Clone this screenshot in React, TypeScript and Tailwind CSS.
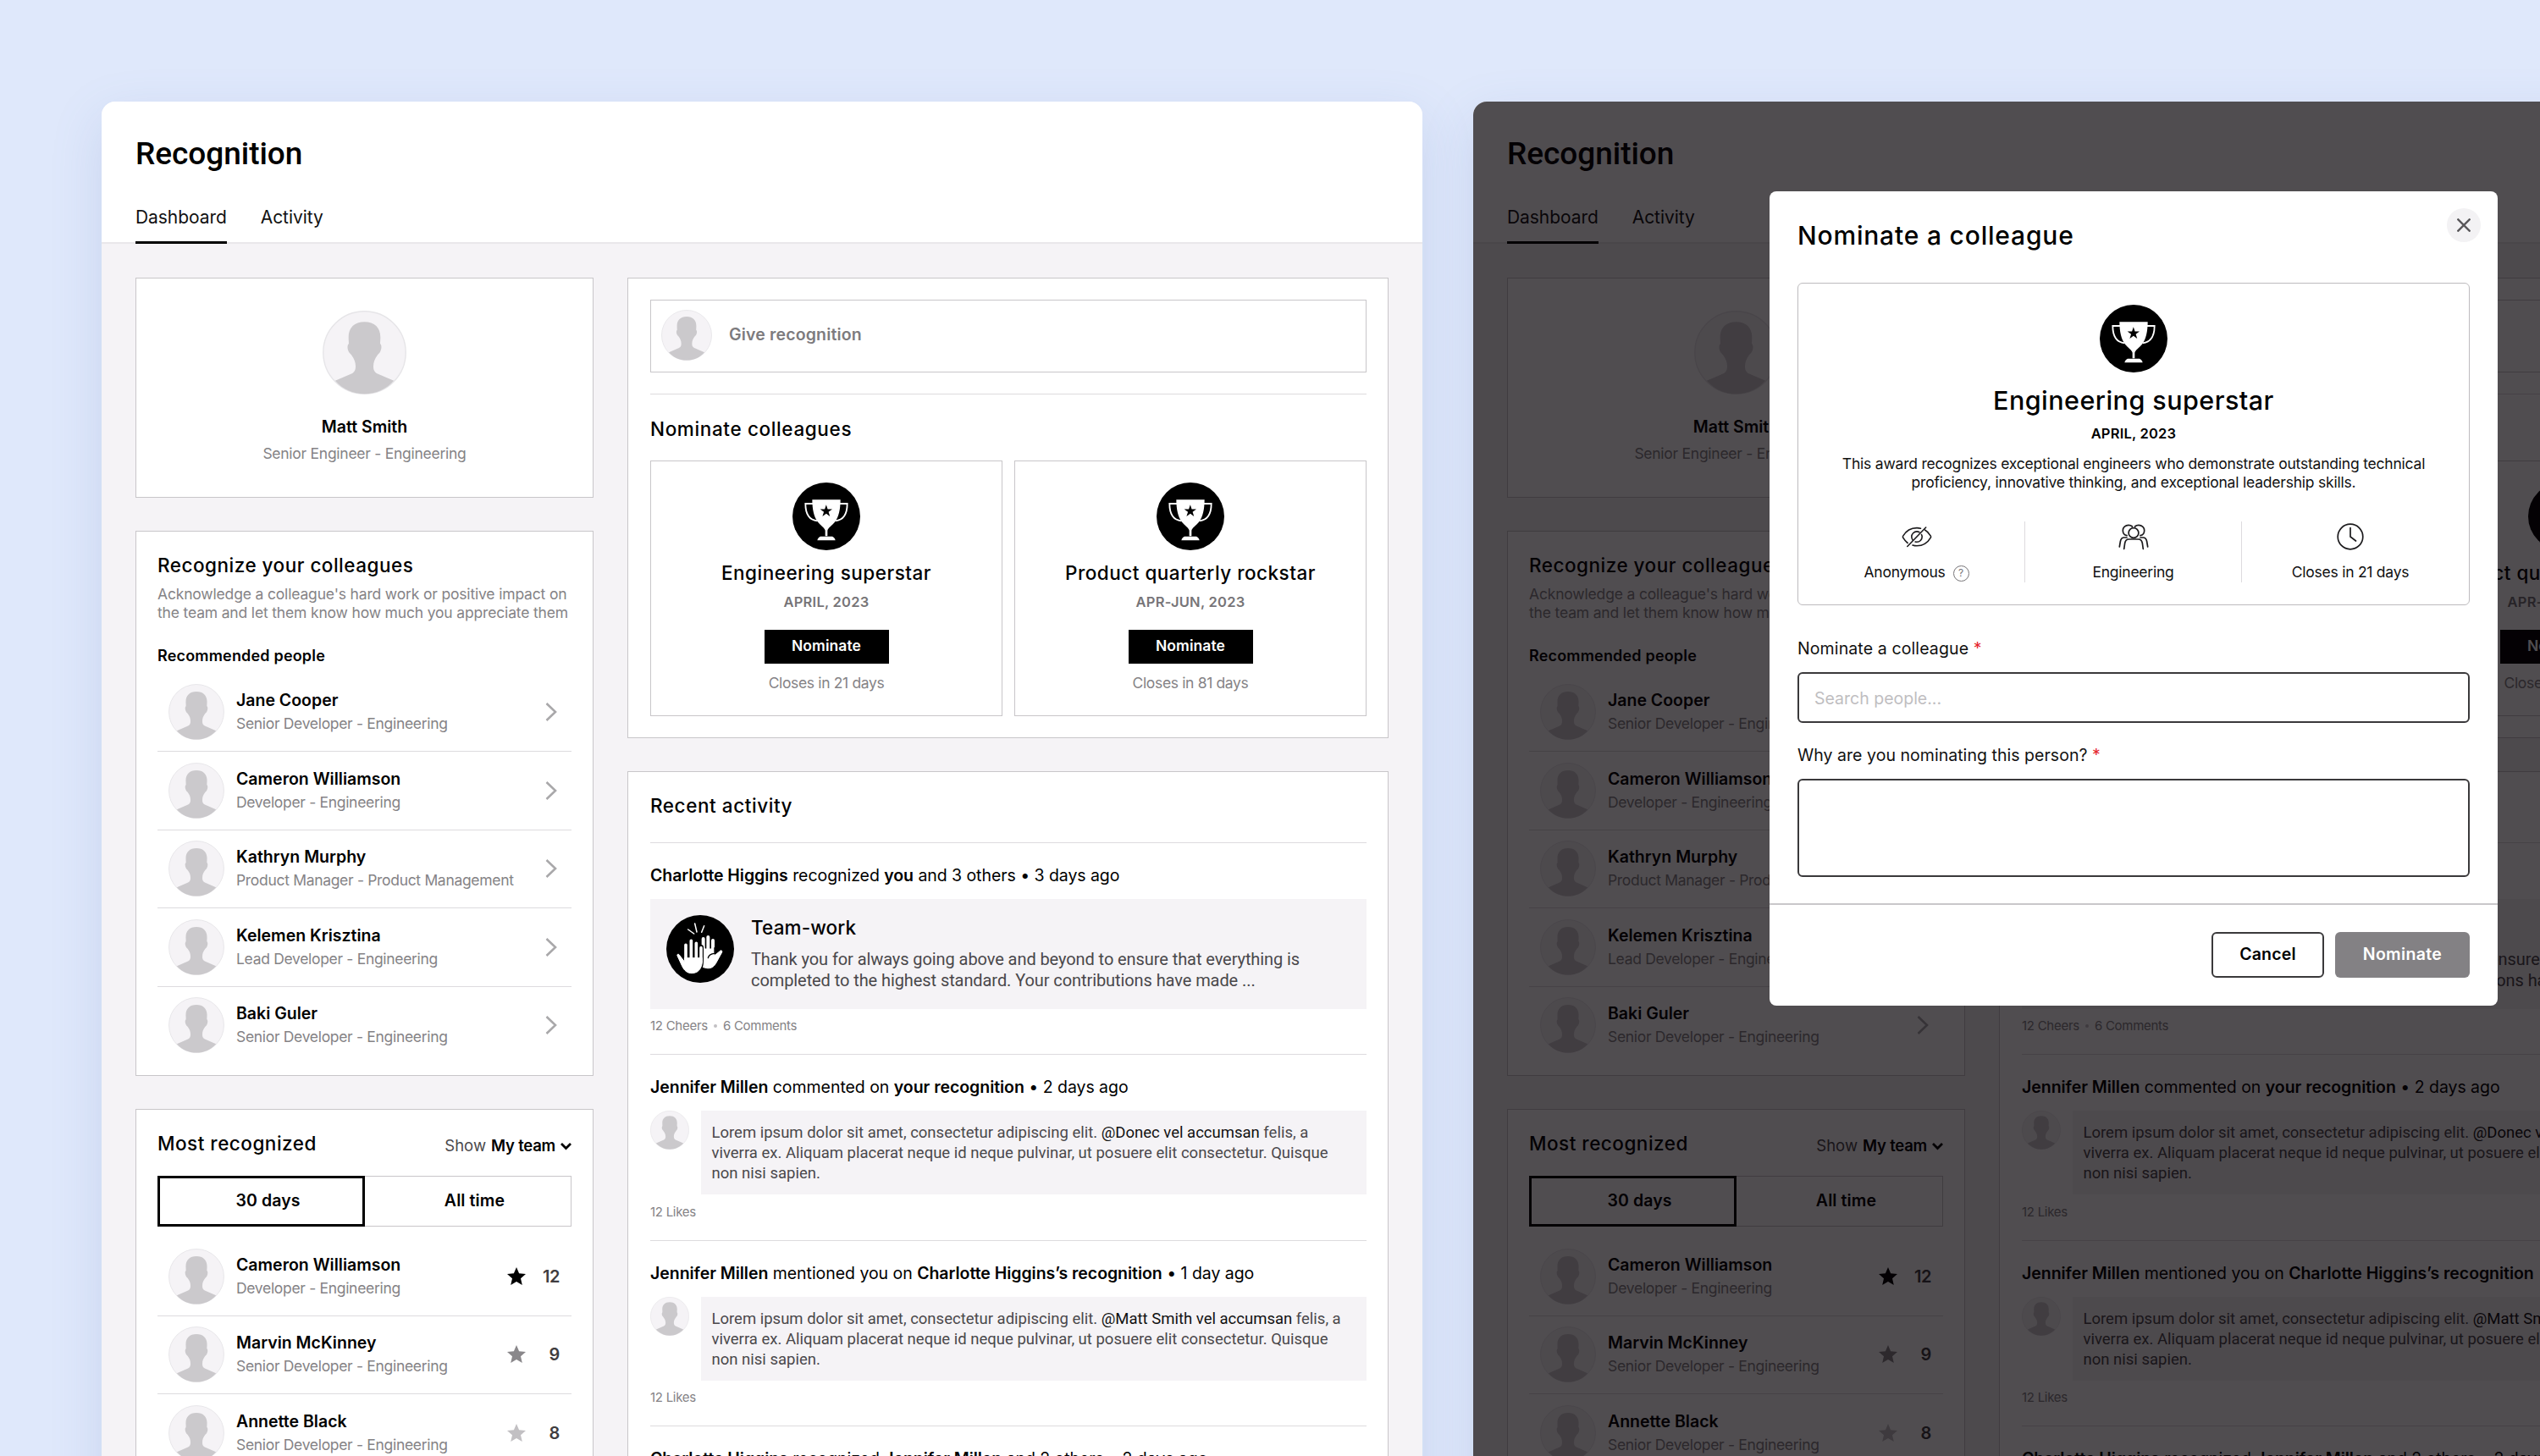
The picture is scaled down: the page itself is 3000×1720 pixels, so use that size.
import React from 'react';

interface Person {
  name: string;
  role: string;
}

interface RankedPerson extends Person {
  count: number;
  starClass: string;
}

interface Award {
  title: string;
  period: string;
  closes: string;
}

const RECOMMENDED: Person[] = [
  { name: 'Jane Cooper', role: 'Senior Developer - Engineering' },
  { name: 'Cameron Williamson', role: 'Developer - Engineering' },
  { name: 'Kathryn Murphy', role: 'Product Manager - Product Management' },
  { name: 'Kelemen Krisztina', role: 'Lead Developer - Engineering' },
  { name: 'Baki Guler', role: 'Senior Developer - Engineering' },
];

const MOST_RECOGNIZED: RankedPerson[] = [
  { name: 'Cameron Williamson', role: 'Developer - Engineering', count: 12, starClass: 'text-black' },
  { name: 'Marvin McKinney', role: 'Senior Developer - Engineering', count: 9, starClass: 'text-[#8a888b]' },
  { name: 'Annette Black', role: 'Senior Developer - Engineering', count: 8, starClass: 'text-[#c2c0c3]' },
];

const AWARDS: Award[] = [
  { title: 'Engineering superstar', period: 'APRIL, 2023', closes: 'Closes in 21 days' },
  { title: 'Product quarterly rockstar', period: 'APR-JUN, 2023', closes: 'Closes in 81 days' },
];

const Avatar: React.FC<{ className: string }> = ({ className }) => (
  <svg className={`shrink-0 ${className}`} viewBox="0 0 100 100">
    <circle cx="50" cy="50" r="49.2" fill="#f5f3f6" stroke="#e6e5e8" strokeWidth="1.4" />
    <path
      d="M50 13.5c-12 0-19 7-19 18 0 3 .3 6 .3 8-2 1.500-2 6.500.2 10 .9 1.600 2 2.200 3 3.500 3.300 4.500 4.900 8.500 4.900 13.500 0 3.500-.8 6.500-4.400 8.500L15 83.700C24 94 36 99.300 50 99.300S76 94 85 83.700L65 75c-3.600-2-4.400-5-4.400-8.500 0-5 1.600-9 4.900-13.500 1-1.300 2.100-1.900 3-3.500 2.200-3.500 2.200-8.500.2-10 0-2 .3-5 .3-8 0-11-7-18-19-18z"
      fill="#cbc9cc"
    />
  </svg>
);

const TrophyBadge: React.FC = () => (
  <svg className="w-20 h-20 shrink-0" viewBox="0 0 240 240">
    <circle cx="120" cy="120" r="120" fill="#000" />
    <path d="M72 75H46c0 34 12 58 42 61M168 75h26c0 34-12 58-42 61" fill="none" stroke="#fff" strokeWidth="5.500" />
    <path d="M70 61h100c0 34-6 62-20 79-11 13-24 20-26 30v20h-8v-20c-2-10-15-17-26-30-14-17-20-45-20-79z" fill="#fff" />
    <path d="M99 191h42c5 2 10 7 11 14H88c1-7 6-12 11-14z" fill="#fff" />
    <path d="M119.500 79l5.200 15.500h16.300l-13.200 9.700 5 16-13.300-9.700-13.300 9.700 5-16-13.200-9.700h16.300z" fill="#000" />
  </svg>
);

const HighFiveBadge: React.FC = () => (
  <svg className="w-20 h-20 shrink-0" viewBox="0 0 240 240">
    <circle cx="120" cy="120" r="120" fill="#000" />
    <path d="M77 51l21 15M101 30l7 30M134 38l-9 23" stroke="#fff" strokeWidth="4.500" strokeLinecap="round" />
    {/* right hand */}
    <g fill="#fff" stroke="#fff" strokeLinecap="round" strokeLinejoin="round">
      <path d="M131 84v50M148 78v50M165 90v45" strokeWidth="12" />
      <path d="M126 120h44v24l22-18c3-2 7 1 5 6l-22 40c-8 14-20 18-32 16l-16-4z" strokeWidth="3" />
    </g>
    <path d="M171 116v20c-13 1-21 5-23 16" fill="none" stroke="#000" strokeWidth="4" strokeLinecap="round" />
    {/* left hand, outlined so that it reads in front */}
    <path d="M123 114v46c0 28-10 46-33 46" fill="none" stroke="#000" strokeWidth="18" strokeLinecap="round" />
    <g fill="#fff" stroke="#fff" strokeLinecap="round" strokeLinejoin="round">
      <path d="M69 106v50M88 91v60M106 100v50M123 116v40" strokeWidth="11" />
      <path d="M65 152h62.500c2 26-8 54-37 54-17 0-27-10-34-24L39 144c-2-5 3-7 6-4l20 26z" strokeWidth="3" />
    </g>
  </svg>
);

const StarIcon: React.FC<{ className: string }> = ({ className }) => (
  <svg className={`w-[22px] h-[22px] ${className}`} viewBox="0 0 22 22" fill="currentColor">
    <path d="M11 0l3.100 7.300 7.900.7-6 5.200 1.800 7.800L11 17l-6.800 4L6 13.200 0 8l7.900-.7z" />
  </svg>
);

const ChevronRight: React.FC = () => (
  <svg className="w-[14px] h-6" viewBox="0 0 14 24" fill="none" stroke="#a9a8aa" strokeWidth="2.600">
    <path d="M1.500 2l10.500 10-10.500 10" />
  </svg>
);

const EyeOffIcon: React.FC = () => (
  <svg className="w-9 h-8" viewBox="0 0 36 32" fill="none" stroke="#1c1b1d" strokeWidth="1.600" strokeLinecap="round">
    <path d="M22.500 6.200C21 5.800 19.500 5.600 18 5.600 11 5.600 5 9.500 1.700 15.200c-.5.800-.5 1.300 0 2 1.500 2.500 3.200 4.600 5.400 6.300M27.500 8c3 1.600 5 4.200 6.800 7.200.5.800.5 1.300 0 2C31 22.900 25 26.800 18 26.800c-1.800 0-3.500-.3-5-.8" />
    <path d="M21 10.700c-.9-.5-1.900-.8-3-.8-3.400 0-6.200 2.800-6.200 6.200 0 1.600.6 3 1.500 4.100M23.500 13.500c.4.800.7 1.700.7 2.600 0 3.400-2.800 6.200-6.200 6.200-.7 0-1.300-.1-1.900-.3" />
    <path d="M6.800 27.500L28.700 5" />
  </svg>
);

const PeopleIcon: React.FC = () => (
  <svg className="w-9 h-8" viewBox="0 0 36 32" fill="none" stroke="#1c1b1d" strokeWidth="1.700" strokeLinecap="round">
    <circle cx="18" cy="11.500" r="5.900" />
    <path d="M16.500 4C15.300 2.900 13.700 2.300 12 2.300c-3.700 0-6.700 2.600-6.700 6.200 0 3.200 2 5.700 4.800 6.200M19.500 4c1.200-1.100 2.800-1.700 4.500-1.700 3.700 0 6.700 2.600 6.700 6.200 0 3.200-2 5.700-4.800 6.200" />
    <path d="M6.700 30.500l1-7c.5-3 2.100-4.500 4.800-4.500h11c2.700 0 4.300 1.500 4.800 4.500l1 7M1.300 28l1.100-6.500c.5-3 2-4.500 4.600-4.500h3M34.700 28l-1.100-6.500c-.5-3-2-4.500-4.600-4.500h-3" />
  </svg>
);

const ClockIcon: React.FC = () => (
  <svg className="w-8 h-8" viewBox="0 0 32 32" fill="none" stroke="#1c1b1d" strokeWidth="1.700" strokeLinecap="round">
    <circle cx="16" cy="16" r="14.800" />
    <path d="M16 5.500V16l6.500 5" />
  </svg>
);

const PersonLabel: React.FC<Person> = ({ name, role }) => (
  <div className="flex flex-col gap-1 flex-1 whitespace-nowrap">
    <span className="text-[19.5px] leading-6 font-semibold text-black">{name}</span>
    <span className="text-[17.5px] leading-6 tracking-[-0.018em] text-[#858386]">{role}</span>
  </div>
);

const ProfileCard: React.FC = () => (
  <section className="h-[260px] bg-white border border-[#c8c6c9] flex flex-col items-center pt-[38px]">
    <Avatar className="w-[99px] h-[99px]" />
    <p className="mt-[26px] text-[19.5px] leading-6 font-semibold text-black">Matt Smith</p>
    <p className="mt-[8px] text-[17.5px] leading-6 tracking-[-0.015em] text-[#858386]">Senior Engineer - Engineering</p>
  </section>
);

const RecommendedCard: React.FC = () => (
  <section className="h-[643.5px] bg-white border border-[#c8c6c9] px-[25px] pt-[25.5px]">
    <h2 className="text-[22.5px] leading-7 font-[540] tracking-[0.022em] text-black">Recognize your colleagues</h2>
    <p className="mt-[9px] text-[17.5px] leading-[22.5px] tracking-[-0.0095em] text-[#858386] whitespace-nowrap">
      Acknowledge a colleague's hard work or positive impact on
      <br />
      the team and let them know how much you appreciate them
    </p>
    <h3 className="mt-[27px] text-[18px] leading-6 font-semibold tracking-[0.01em] text-black">Recommended people</h3>
    <ul className="mt-[9px]">
      {RECOMMENDED.map((person) => (
        <li key={person.name} className="h-[92.5px] flex items-center gap-3.5 pl-[13px] pr-[17px] border-b border-[#dddbde] last:border-transparent">
          <Avatar className="w-[66px] h-[66px]" />
          <PersonLabel {...person} />
          <ChevronRight />
        </li>
      ))}
    </ul>
  </section>
);

const MostRecognizedCard: React.FC = () => (
  <section className="flex-1 bg-white border border-[#c8c6c9] px-[25px] pt-[26px]">
    <div className="flex items-center justify-between">
      <h2 className="text-[22.5px] leading-7 font-[540] tracking-[0.022em] text-black">Most recognized</h2>
      <div className="flex items-center gap-1.5 pt-1 text-[18.5px] leading-6">
        <span className="text-[#4b494c]">Show</span>
        <span className="font-semibold tracking-[-0.012em] text-black">My team</span>
        <svg className="w-[13px] h-2.5 mt-0.5" viewBox="0 0 13 10" fill="none" stroke="#000" strokeWidth="2.800">
          <path d="M1 2l5.500 5.500L12 2" />
        </svg>
      </div>
    </div>
    <div className="mt-[23.5px] h-[60px] flex text-[19.5px] font-[560] tracking-[0.006em] text-black">
      <button className="w-[245px] pl-4 pt-px border-[3px] border-black">30 days</button>
      <button className="flex-1 pl-4 pt-px border border-l-0 border-[#c8c6c9]">All time</button>
    </div>
    <ul className="mt-[13.5px]">
      {MOST_RECOGNIZED.map((person) => (
        <li key={person.name} className="h-[92.5px] flex items-center gap-3.5 pl-[13px] pr-3.5 border-b border-[#dddbde]">
          <Avatar className="w-[66px] h-[66px]" />
          <PersonLabel name={person.name} role={person.role} />
          <StarIcon className={person.starClass} />
          <span className="w-[26px] text-right text-[20px] font-[560] tracking-[-0.02em] text-[#3f3d40]">{person.count}</span>
        </li>
      ))}
    </ul>
  </section>
);

const AwardTile: React.FC<Award> = ({ title, period, closes }) => (
  <div className="w-[416px] h-[302px] border border-[#c8c6c9] flex flex-col items-center pt-[25px]">
    <TrophyBadge />
    <h3 className="mt-[13.5px] text-[22.5px] leading-7 font-[540] tracking-[0.022em] text-black">{title}</h3>
    <p className="mt-[8px] text-[16.5px] leading-6 font-[560] tracking-[0.015em] text-[#777578]">{period}</p>
    <button className="mt-[20.5px] w-[147px] h-10 bg-black text-white text-[17.5px] font-[560] tracking-[0.004em]">Nominate</button>
    <p className="mt-[11px] text-[17.5px] leading-6 tracking-[-0.02em] text-[#858386]">{closes}</p>
  </div>
);

const NominateCard: React.FC = () => (
  <section className="h-[544px] bg-white border border-[#c8c6c9] pl-[26px] pr-[25px] pt-[25px]">
    <div className="h-[86px] flex items-center gap-[20px] pl-3 pb-px border border-[#c8c6c9]">
      <Avatar className="w-[60px] h-[60px]" />
      <span className="text-[19.5px] font-[560] tracking-[0.008em] text-[#7d7b7e]">Give recognition</span>
    </div>
    <div className="mt-[25px] h-px bg-[#dddbde]" />
    <h2 className="mt-[27px] text-[22.5px] leading-7 font-[540] tracking-[0.028em] text-black">Nominate colleagues</h2>
    <div className="mt-[23px] flex justify-between">
      {AWARDS.map((award) => (
        <AwardTile key={award.title} {...award} />
      ))}
    </div>
  </section>
);

const Strong: React.FC<{ children: React.ReactNode }> = ({ children }) => (
  <span className="font-semibold">{children}</span>
);

const CommentItem: React.FC<{ heading: React.ReactNode; mention: string }> = ({ heading, mention }) => (
  <article className="pt-6 border-b border-[#dddbde]">
    <p className="text-[19.5px] leading-7 tracking-[-0.002em] text-black">{heading}</p>
    <div className="mt-3.5 flex justify-between items-start">
      <Avatar className="w-[46px] h-[46px]" />
      <p className="w-[786.5px] h-[99px] bg-[#f5f3f6] pl-[13px] pt-[14px] font-[Roboto,sans-serif] text-[18.5px] leading-6 text-[#4a484b] whitespace-nowrap">
        Lorem ipsum dolor sit amet, consectetur adipiscing elit. <span className="text-[#111]">{mention}</span> felis, a
        <br />
        viverra ex. Aliquam placerat neque id neque pulvinar, ut posuere elit consectetur. Quisque
        <br />
        non nisi sapien.
      </p>
    </div>
    <p className="mt-[10.5px] pb-[23px] text-[15px] leading-5 tracking-[-0.018em] text-[#858386]">12 Likes</p>
  </article>
);

const ActivityCard: React.FC = () => (
  <section className="flex-1 bg-white border border-[#c8c6c9] pl-[26px] pr-[25px] pt-[26px]">
    <h2 className="pb-[29px] text-[22.5px] leading-7 font-[540] tracking-[0.025em] text-black border-b border-[#dddbde]">Recent activity</h2>
    <article className="pt-6 border-b border-[#dddbde]">
      <p className="text-[19.5px] leading-7 tracking-[-0.003em] text-black">
        <Strong>Charlotte Higgins</Strong> recognized <Strong>you</Strong> and 3 others • 3 days ago
      </p>
      <div className="mt-3.5 h-[129.5px] flex gap-5 bg-[#f5f3f6] pl-[19px] pt-[19px]">
        <HighFiveBadge />
        <div className="flex flex-col gap-[11.5px] pt-[0.5px]">
          <h3 className="text-[22.5px] leading-7 font-[540] tracking-[0.006em] text-black">Team-work</h3>
          <p className="font-[Roboto,sans-serif] text-[20px] leading-[25px] tracking-[-0.004em] text-[#4a484b] whitespace-nowrap">
            Thank you for always going above and beyond to ensure that everything is
            <br />
            completed to the highest standard. Your contributions have made ...
          </p>
        </div>
      </div>
      <div className="mt-[10.5px] pb-[23px] flex items-center gap-[7px] text-[15px] leading-5 tracking-[-0.018em] text-[#858386]">
        <span>12 Cheers</span>
        <span className="w-[4px] h-[4px] rounded-full bg-[#c2c0c3]" />
        <span>6 Comments</span>
      </div>
    </article>
    <CommentItem
      heading={<><Strong>Jennifer Millen</Strong> commented on <Strong>your recognition</Strong> • 2 days ago</>}
      mention="@Donec vel accumsan"
    />
    <CommentItem
      heading={<><Strong>Jennifer Millen</Strong> mentioned you on <Strong>Charlotte Higgins’s recognition</Strong> • 1 day ago</>}
      mention="@Matt Smith vel accumsan"
    />
    <p className="pt-6 text-[19.5px] leading-7 tracking-[-0.003em] text-black">
      <Strong>Charlotte Higgins</Strong> recognized <Strong>Jennifer Millen</Strong> and 2 others • 2 days ago
    </p>
  </section>
);

const RecognitionPage: React.FC = () => (
  <div className="w-[1560px] h-[1700px] flex flex-col bg-[#f5f3f6] rounded-[16px] overflow-hidden">
    <header className="h-[168px] shrink-0 bg-white border-b-2 border-[#e9e7ea] px-10 flex flex-col justify-end">
      <h1 className="mb-[39px] font-[Roboto,sans-serif] text-[37px] leading-[44px] font-medium tracking-[-0.001em] text-black">Recognition</h1>
      <nav className="-mb-0.5 flex gap-10 text-[21px] leading-7 tracking-[-0.003em] text-[#111]">
        <a className="h-[45px] border-b-[3px] border-black">Dashboard</a>
        <a className="h-[45px]">Activity</a>
      </nav>
    </header>
    <main className="flex-1 flex justify-between px-10 pt-[39.5px]">
      <div className="w-[541px] flex flex-col gap-[39.5px]">
        <ProfileCard />
        <RecommendedCard />
        <MostRecognizedCard />
      </div>
      <div className="w-[899px] flex flex-col gap-[39.5px]">
        <NominateCard />
        <ActivityCard />
      </div>
    </main>
  </div>
);

const NominateModal: React.FC = () => (
  <div className="absolute left-[350px] top-[106px] w-[860px] h-[962px] bg-white rounded-lg flex flex-col">
    <button className="absolute right-5 top-5 w-10 h-10 rounded-full bg-[#f3f2f4] flex items-center justify-center">
      <svg className="w-4 h-4" viewBox="0 0 16 16" stroke="#5a585b" strokeWidth="2.400">
        <path d="M.5.5l15 15M15.500.5l-15 15" />
      </svg>
    </button>
    <div className="px-[33px] pt-8">
      <h2 className="text-[30px] leading-10 font-[540] tracking-[0.027em] text-black">Nominate a colleague</h2>
      <div className="mt-9 h-[381px] border border-[#bdbbbe] rounded-md pt-[25px] px-3 flex flex-col items-center">
        <TrophyBadge />
        <h3 className="mt-[12.5px] text-[30.5px] leading-10 font-[540] tracking-[0.015em] text-black">Engineering superstar</h3>
        <p className="mt-[7.5px] text-[16.5px] leading-6 font-semibold tracking-[0.013em] text-black">APRIL, 2023</p>
        <p className="mt-[12.5px] text-[17.5px] leading-[22.7px] tracking-[-0.012em] text-[#111] text-center whitespace-nowrap">
          This award recognizes exceptional engineers who demonstrate outstanding technical
          <br />
          proficiency, innovative thinking, and exceptional leadership skills.
        </p>
        <div className="mt-[34px] w-full h-[72px] grid grid-cols-3 divide-x divide-[#dddbde] text-[17.5px] leading-6 tracking-[-0.014em] text-[#111]">
          <div className="flex flex-col items-center gap-[14.5px] pt-0.5">
            <EyeOffIcon />
            <span className="flex items-center gap-[9px]">
              Anonymous
              <span className="w-[19px] h-[19px] mt-0.5 rounded-full border border-[#777578] flex items-center justify-center text-[12px] leading-none text-[#777578]">?</span>
            </span>
          </div>
          <div className="flex flex-col items-center gap-[14.5px] pt-0.5">
            <PeopleIcon />
            <span>Engineering</span>
          </div>
          <div className="flex flex-col items-center gap-[14.5px] pt-0.5">
            <ClockIcon />
            <span>Closes in 21 days</span>
          </div>
        </div>
      </div>
      <label className="block mt-[37px] text-[19.5px] leading-7 tracking-[0.006em] text-[#111]">
        Nominate a colleague <span className="text-[#e5252c]">*</span>
      </label>
      <input
        type="text"
        placeholder="Search people..."
        className="block mt-3.5 w-full h-[60px] px-[18px] pt-0.5 border-2 border-[#3a393b] rounded-md text-[19.5px] outline-none placeholder:text-[#c0bec1]"
      />
      <label className="block mt-[23.5px] text-[19.5px] leading-7 tracking-[0.002em] text-[#111]">
        Why are you nominating this person? <span className="text-[#e5252c]">*</span>
      </label>
      <textarea className="block mt-3.5 w-full h-[116px] border-2 border-[#3a393b] rounded-md outline-none resize-none" />
    </div>
    <div className="mt-[31px] flex-1 border-t-2 border-[#c9c7ca] px-[33px] pt-8 flex justify-end gap-[13px] text-[19.5px] font-semibold">
      <button className="w-[133px] h-[54px] pt-px border-2 border-[#3a393b] rounded-md text-black tracking-[0.01em]">Cancel</button>
      <button className="w-[159px] h-[54px] pt-px bg-[#838184] rounded-md text-white tracking-[0.018em]">Nominate</button>
    </div>
  </div>
);

export default function App() {
  return (
    <div className="w-[3000px] h-[1720px] overflow-hidden bg-[#dfe8fb] pl-[120px] pt-[120px] flex gap-[60px] font-[Inter,sans-serif]">
      <div className="shrink-0 rounded-[16px] h-[1700px] shadow-[0_20px_60px_rgba(100,125,190,0.18)]">
        <RecognitionPage />
      </div>
      <div className="relative shrink-0 rounded-[16px] h-[1700px] shadow-[0_20px_60px_rgba(100,125,190,0.18)]">
        <RecognitionPage />
        <div className="absolute inset-0 rounded-[16px] bg-[#050205]/70" />
        <NominateModal />
      </div>
    </div>
  );
}
